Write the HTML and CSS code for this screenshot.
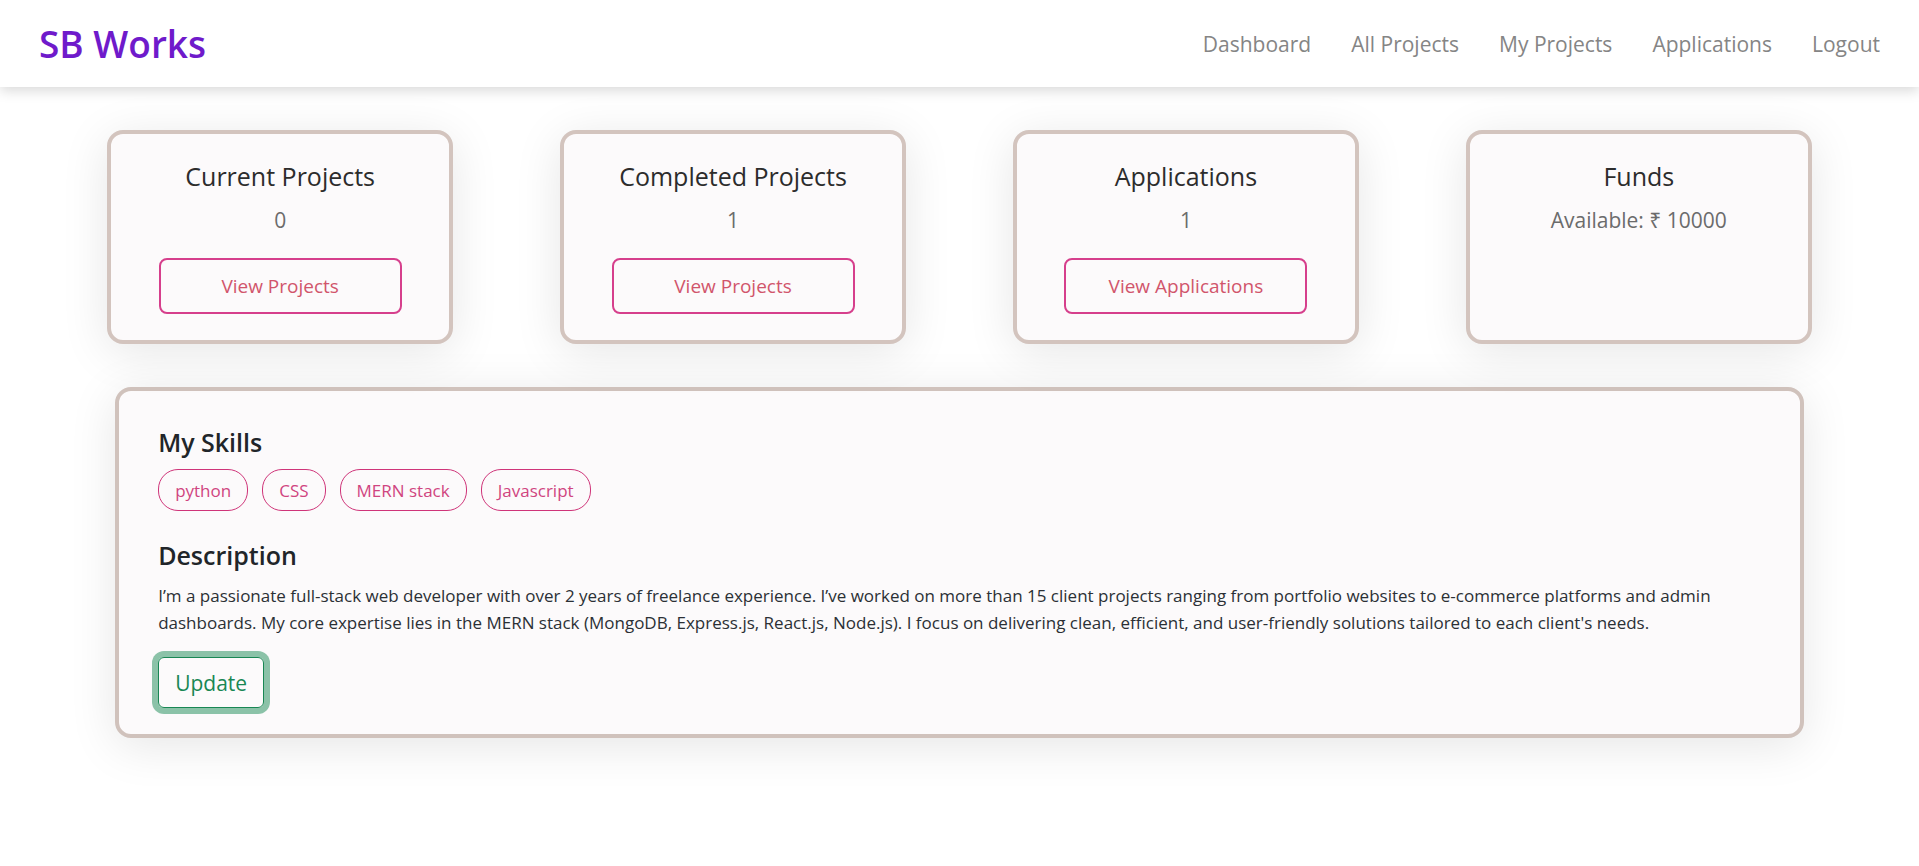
FILE: index.html
```html
<!DOCTYPE html>
<html lang="en">
<head>
  <meta charset="utf-8">
  <meta name="viewport" content="width=device-width, initial-scale=1">
  <title>SB Works</title>
  <link rel="stylesheet" href="styles.css">
</head>
<body>
  <header class="navbar">
    <h1 class="brand">SB Works</h1>
    <nav class="nav-links">
      <a href="#dashboard">Dashboard</a>
      <a href="#all-projects">All Projects</a>
      <a href="#my-projects">My Projects</a>
      <a href="#applications">Applications</a>
      <a href="#logout">Logout</a>
    </nav>
  </header>
  <main class="page">
    <section class="cards">
      <article class="card">
        <h2 class="card-title">Current Projects</h2>
        <p class="card-value">0</p>
        <button class="card-button" type="button">View Projects</button>
      </article>
      <article class="card">
        <h2 class="card-title">Completed Projects</h2>
        <p class="card-value">1</p>
        <button class="card-button" type="button">View Projects</button>
      </article>
      <article class="card">
        <h2 class="card-title">Applications</h2>
        <p class="card-value">1</p>
        <button class="card-button" type="button">View Applications</button>
      </article>
      <article class="card">
        <h2 class="card-title">Funds</h2>
        <p class="card-value">Available: ₹ 10000</p>
      </article>
    </section>
    <section class="profile">
      <h2 class="profile-heading">My Skills</h2>
      <ul class="skills">
        <li class="skill">python</li>
        <li class="skill">CSS</li>
        <li class="skill">MERN stack</li>
        <li class="skill">Javascript</li>
      </ul>
      <h2 class="profile-heading">Description</h2>
      <p class="description">I’m a passionate full-stack web developer with over 2 years of freelance experience. I’ve worked on more than 15 client projects ranging from portfolio websites to e-commerce platforms and admin dashboards. My core expertise lies in the MERN stack (MongoDB, Express.js, React.js, Node.js). I focus on delivering clean, efficient, and user-friendly solutions tailored to each client's needs.</p>
      <button class="update-button" type="button">Update</button>
    </section>
  </main>
</body>
</html>
```
FILE: styles.css
```css
* {
  box-sizing: border-box;
}

body {
  margin: 0;
  background: #fff;
  color: #2b3035;
  font-family: "Segoe UI", "Open Sans", "Noto Sans", sans-serif;
  font-size: 17px;
  line-height: 27px;
}

h1, h2, p, ul {
  margin: 0;
  padding: 0;
}

button {
  background: transparent;
  font-family: inherit;
  cursor: pointer;
}

.navbar {
  position: relative;
  display: flex;
  align-items: center;
  justify-content: space-between;
  padding: 20px 39px 19px;
  background: #fff;
  box-shadow: 0 4px 12px rgba(0, 0, 0, 0.15);
}

.brand {
  color: #6f1acb;
  font-size: 37px;
  font-weight: 600;
  line-height: 48px;
}

.nav-links {
  display: flex;
  gap: 40px;
}

.nav-links a {
  color: #858585;
  font-size: 21px;
  line-height: 32px;
  text-decoration: none;
}

.cards {
  display: flex;
  flex-wrap: wrap;
  justify-content: space-evenly;
  padding: 43px 0;
}

.card {
  display: flex;
  flex-direction: column;
  align-items: center;
  width: 18%;
  padding: 25px 0 26px;
  border: 4px solid #d3c4be;
  border-radius: 16px;
  background: #fcfafb;
  box-shadow: 0 8px 48px rgba(0, 0, 0, 0.1);
  text-align: center;
}

.card-title {
  margin-bottom: 10px;
  color: #2c2c2c;
  font-size: 25px;
  font-weight: 400;
  line-height: 34px;
}

.card-value {
  margin-bottom: 21px;
  color: #6b6b6b;
  font-size: 21px;
  line-height: 34px;
}

.card-button {
  width: 72%;
  padding: 11px 0;
  border: 2px solid #d63f8c;
  border-radius: 8px;
  color: #d1556b;
  font-size: 19px;
  line-height: 30px;
}

.profile {
  width: 88%;
  margin: 0 auto 48px;
  padding: 34px 39px 26px;
  border: 4px solid #d0c2bc;
  border-radius: 16px;
  background: #fcfafb;
  box-shadow: 0 8px 48px rgba(0, 0, 0, 0.1);
}

.profile-heading {
  margin-bottom: 10px;
  color: #212529;
  font-size: 25px;
  font-weight: 600;
  line-height: 34px;
}

.skills {
  display: flex;
  flex-wrap: wrap;
  gap: 14px;
  margin-bottom: 27px;
  list-style: none;
}

.skill {
  padding: 8px 16px 7px;
  border: 1px solid #cf3479;
  border-radius: 20px;
  color: #d04580;
  line-height: 25px;
}

.description {
  margin-bottom: 21px;
}

.update-button {
  padding: 9px 16px 8px;
  border: 1px solid #198754;
  border-radius: 6px;
  color: #198754;
  font-size: 21px;
  line-height: 32px;
  box-shadow: 0 0 0 6px #8bc2a8;
}
```
